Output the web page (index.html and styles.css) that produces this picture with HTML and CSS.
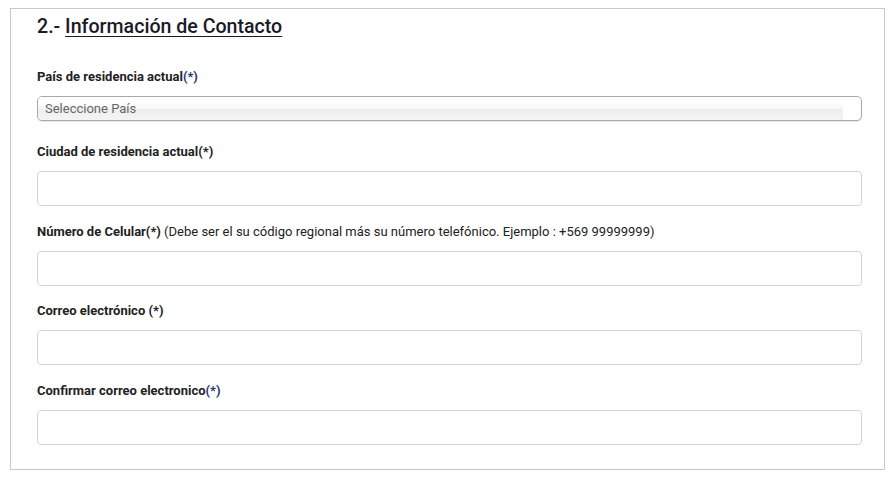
FILE: index.html
```html
<!DOCTYPE html>
<html lang="es">
<head>
<meta charset="utf-8">
<title>Información de Contacto</title>
<link rel="stylesheet" href="styles.css">
</head>
<body>
<section class="panel">
  <h2 class="title">2.- <span class="title-u">Información de Contacto</span></h2>
  <div class="group group-select">
    <label class="lbl">País de residencia actual<span class="req">(*)</span></label>
    <div class="select"><span class="select-inner">Seleccione País</span></div>
  </div>
  <div class="group">
    <label class="lbl">Ciudad de residencia actual(*)</label>
    <input class="field" type="text">
  </div>
  <div class="group">
    <label class="lbl">Número de Celular(*) <span class="hint">(Debe ser el su código regional más su número telefónico. Ejemplo : +569 99999999)</span></label>
    <input class="field" type="text">
  </div>
  <div class="group">
    <label class="lbl">Correo electrónico (*)</label>
    <input class="field" type="text">
  </div>
  <div class="group last">
    <label class="lbl">Confirmar correo electronico<span class="req">(*)</span></label>
    <input class="field" type="text">
  </div>
</section>
</body>
</html>
```
FILE: styles.css
```css
html, body {
  margin: 0;
  padding: 0;
  background: #fff;
}
body {
  font-family: Roboto, "Liberation Sans", Arial, sans-serif;
  color: #222;
}
.panel {
  box-sizing: border-box;
  width: 875px;
  height: 462px;
  margin: 8px 0 0 10px;
  border: 1px solid #c8c8c8;
  padding: 6px 22px 24px 26px;
  display: flex;
  flex-direction: column;
}
.title {
  margin: 0 0 28px 0;
  font-size: 19.6px;
  line-height: 24px;
  font-weight: 500;
  color: #1a1a28;
}
.title-u {
  text-decoration: underline;
  text-underline-offset: 3px;
  text-decoration-thickness: 1px;
}
.group {
  display: flex;
  flex-direction: column;
  margin-bottom: 15.5px;
}
.group-select {
  margin-bottom: 21px;
}
.group.last {
  margin-bottom: 0;
}
.lbl {
  display: block;
  font-size: 13px;
  line-height: 19px;
  font-weight: 700;
  color: #222;
  margin-bottom: 10px;
}
.req {
  color: #2b3a6e;
}
.hint {
  font-weight: 400;
}
.select {
  box-sizing: border-box;
  height: 25px;
  border: 1px solid #aaa;
  border-radius: 5px;
  background: #fff;
  box-shadow: 0 1px 1px rgba(0,0,0,0.1);
  padding-right: 18px;
  display: flex;
}
.select-inner {
  flex: 1;
  border-radius: 4px 0 0 4px;
  background: linear-gradient(#fff 20%, #f6f6f6 50%, #eee 52%, #f4f4f4 100%);
  font-size: 13px;
  line-height: 23px;
  color: #666;
  padding-left: 7px;
}
.field {
  box-sizing: border-box;
  height: 35px;
  width: 100%;
  margin: 0;
  border: 1px solid #d2d4da;
  border-radius: 4px;
  background: #fff;
  padding: 0 8px;
  font-family: inherit;
  font-size: 13px;
}
```
